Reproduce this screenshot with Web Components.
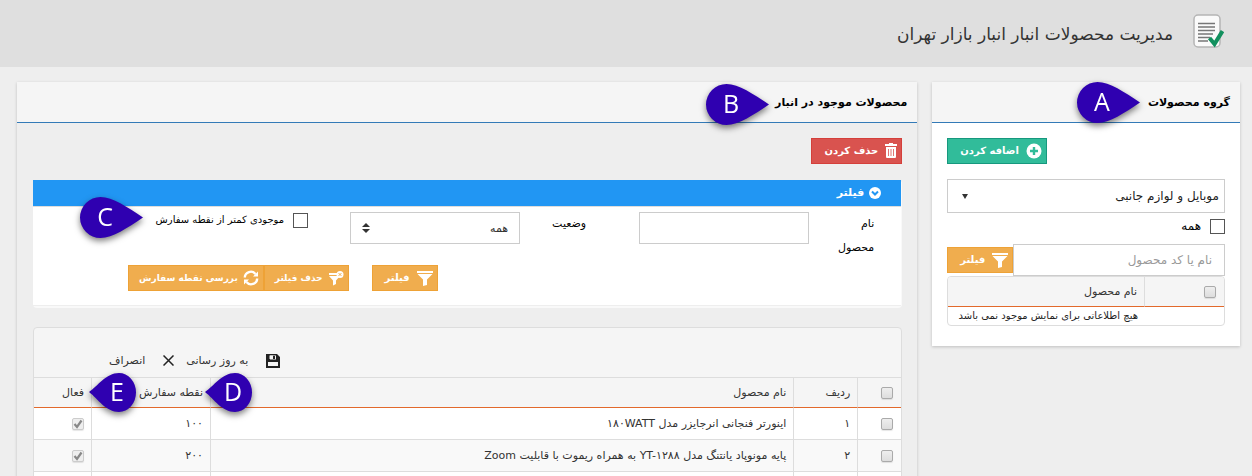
<!DOCTYPE html>
<html lang="fa" dir="rtl">
<head>
<meta charset="utf-8">
<title>مدیریت محصولات انبار</title>
<style>
  html, body { margin: 0; height: 100%; overflow: hidden; }
  body { background: #eee; color: #333; font: 11px/24px "DejaVu Sans", sans-serif; }
</style>
</head>
<body>
<warehouse-page></warehouse-page>
<script>
const icons = {
  plus: '<svg viewBox="0 0 16 16" width="16" height="16"><circle cx="8" cy="8" r="7.5" fill="currentColor"/><path d="M8 4v8M4 8h8" stroke="var(--tone)" stroke-width="2.4"/></svg>',
  trash: '<svg viewBox="0 0 12 16" width="12" height="16" fill="currentColor"><path d="M4 0h4v1h4v2H0V1h4zM1 4h10v10q0 1-1 1H2q-1 0-1-1z"/><path d="M3.5 6v7M6 6v7M8.5 6v7" stroke="var(--tone)" stroke-width=".8"/></svg>',
  funnel: '<svg viewBox="0 0 16 16" width="16" height="16" fill="currentColor"><path d="M0 1h16v2H0zM0.5 4h15L10 9.5V15l-4 1V9.5z"/></svg>',
  unfunnel: '<svg viewBox="0 0 16 16" width="16" height="16" fill="currentColor"><path d="M1 3h8v2H1zM1 6h11L8 10.5V14l-3 1.5V10.5z"/><circle cx="12" cy="4.5" r="3.5"/><path d="M10.6 3.1l2.8 2.8M13.4 3.1l-2.8 2.8" stroke="var(--tone)"/></svg>',
  refresh: '<svg viewBox="0 0 16 16" width="16" height="16" fill="none" stroke="currentColor" stroke-width="2.4"><path d="M1.8 7.5A6 6 0 0 1 12.5 4M14.2 8.5A6 6 0 0 1 3.5 12"/><path d="M15 1.5v5h-5zM1 14.5v-5h5z" fill="currentColor" stroke="none"/></svg>'
};

const define = (name, html, setup) => {
  const template = document.createElement('template');
  template.innerHTML = html;
  customElements.define(name, class extends HTMLElement {
    constructor() {
      super();
      this.attachShadow({ mode: 'open' }).append(template.content.cloneNode(true));
    }
    connectedCallback() { if (setup) setup(this, this.shadowRoot); }
  });
};

/* Teardrop marker with a letter; "flip" points it to the left. */
define('guide-pin', `
  <style>
    :host { position: absolute; z-index: 2; width: 64px; height: 41px; direction: ltr; }
    :host([flip]) { width: 47px; }
    svg { display: block; overflow: visible; filter: drop-shadow(0 3px 3px rgba(0,0,0,.5)); }
    text { font: 25px "Open Sans", sans-serif; fill: #fff; text-anchor: middle; }
  </style>
  <svg></svg>`, (host, root) => {
  const flip = host.hasAttribute('flip');
  const svg = root.querySelector('svg');
  svg.setAttribute('width', flip ? 47 : 64);
  svg.setAttribute('height', 41);
  svg.innerHTML = (flip
    ? '<path d="M0 20C9 14 17 1 30 1A17 19.5 0 0 1 30 40C17 40 9 27 0 20z" fill="#2f00b0"/>'
    : '<path d="M63 20.5C47 10 33 0 20.5 0A20.5 20.5 0 0 0 20.5 41C33 41 47 31 63 20.5z" fill="#2f00b0"/>')
    + `<text x="${flip ? 28 : 25}" y="29">${host.getAttribute('letter')}</text>`;
});

define('page-banner', `
  <style>
    :host { display: flex; flex: none; align-items: center; gap: 20px; height: 67px; padding: 0 28px; background: #dfdfdf; box-sizing: border-box; }
    h1 { margin: 0; font-size: 17px; line-height: 32px; font-weight: 400; color: #333; }
    svg { flex: none; margin-bottom: 6px; }
  </style>
  <svg width="31" height="34" viewBox="0 0 31 34"><rect x="1" y="1" width="26" height="32" rx="4" fill="#fafafa" stroke="#b5b5b5" stroke-width="1.5"/><path d="M5 9.5h17M5 13h17M5 16.5h17M5 20h15M5 23.500h12M5 27h10" stroke="#777" stroke-width="1.5"/><path d="M16.500 24l5 6L29.500 17" fill="none" stroke="#12905e" stroke-width="4"/></svg>
  <h1><slot></slot></h1>`);

define('content-panel', `
  <style>
    :host { display: block; background: var(--panel-bg, #fff); box-shadow: 0 1px 3px rgba(0,0,0,.2); }
    header { position: relative; height: 40px; padding: 0 10px; background: #f5f5f5; border-bottom: 1px solid #337ab7; }
    h2 { margin: 0; font-size: 11px; line-height: 42px; font-weight: 700; color: #000; }
    .body { padding: 15px; }
  </style>
  <header><h2><slot name="title"></slot></h2><slot name="pin"></slot></header>
  <div class="body"><slot></slot></div>`);

define('action-button', `
  <style>
    :host { display: block; --tone: #f0ad4e; --edge: #eea236; }
    :host([tone="add"]) { --tone: #31bc9a; --edge: #17987e; }
    :host([tone="remove"]) { --tone: #d9534f; --edge: #d43f3a; }
    button { display: flex; align-items: center; gap: 7px; height: 26px; margin: 0; padding: 0 4px 0 12px; border: 1px solid var(--edge); background: var(--tone); color: #fff; font: 700 10px/16px "DejaVu Sans", sans-serif; white-space: nowrap; }
    :host([dense]) button { gap: 5px; padding-left: 10px; font-size: 9px; }
    svg { display: block; flex: none; }
    .icon { display: block; }
  </style>
  <button type="button"><span class="icon"></span><slot></slot></button>`, (host, root) => {
  root.querySelector('.icon').innerHTML = icons[host.getAttribute('icon')];
});

define('tick-field', `
  <style>
    :host { display: block; }
    label { display: flex; align-items: center; gap: 9px; line-height: 16px; color: #000; }
    input { appearance: none; flex: none; width: 15px; height: 15px; margin: 0; border: 1px solid #555; background: #fff; }
  </style>
  <label><input type="checkbox"><slot></slot></label>`);

const gridStyles = `
    table { width: 100%; border-collapse: separate; border-spacing: 0; table-layout: fixed; color: #333; }
    th, td { box-sizing: border-box; padding: 0 7px; font-weight: 400; text-align: start; border-inline-start: 1px solid #ddd; white-space: nowrap; }
    th:first-child, td:first-child { border-inline-start: 0; padding-inline-start: 8px; }
    th { height: 30px; background: #f5f5f5; border-bottom: 1px solid #e2692b; }
    th input, td input { appearance: none; display: block; width: 12px; height: 12px; margin: 0; border: 1px solid #aaa; border-radius: 2px; background: linear-gradient(#eee, #ddd); box-shadow: 0 1px 1px rgba(0,0,0,.1); }`;

define('product-groups', `
  <style>
    :host { display: block; }
    .add { display: flex; justify-content: flex-end; margin-bottom: 15px; }
    .pick { display: grid; align-items: center; margin-bottom: 5px; }
    .pick > * { grid-area: 1 / 1; }
    select { appearance: none; width: 100%; height: 34px; margin: 0; padding: 0 5px; border: 1px solid #ccc; border-radius: 0; background: #fff; color: #222; font: 12px "DejaVu Sans", sans-serif; }
    .pick svg { justify-self: end; margin-inline-end: 15px; pointer-events: none; }
    tick-field { font-size: 12px; }
    .search { display: flex; align-items: center; margin-top: 10px; }
    .search input { flex: 1; min-width: 0; height: 32px; box-sizing: border-box; margin: 0; padding: 0 12px; border: 1px solid #ccc; background: #fff; font: 12px "DejaVu Sans", sans-serif; }
    .search input::placeholder { color: #999; opacity: 1; }
    .frame { border: 1px solid #ddd; border-radius: 4px; overflow: hidden; margin-bottom: 5px; }
    ${gridStyles}
    td { height: 18px; line-height: 18px; border: 0; font-size: 10px; color: #222; }
    .tick { width: 79px; }
  </style>
  <div class="add"><action-button tone="add" icon="plus">اضافه کردن</action-button></div>
  <div class="pick">
    <select aria-label="گروه محصولات"><option>موبایل و لوازم جانبی</option></select>
    <svg width="6" height="5"><path d="M0 0h6L3 5z" fill="#333"/></svg>
  </div>
  <tick-field>همه</tick-field>
  <div class="search"><input type="text" aria-label="نام یا کد محصول" placeholder="نام یا کد محصول"><action-button icon="funnel">فیلتر</action-button></div>
  <div class="frame"><table>
    <thead><tr><th class="tick"><input type="checkbox" aria-label="انتخاب همه"></th><th>نام محصول</th></tr></thead>
    <tbody><tr><td></td><td>هیچ اطلاعاتی برای نمایش موجود نمی باشد</td></tr></tbody>
  </table></div>`);

define('filter-panel', `
  <style>
    :host { display: block; border: solid #f9f9f9; border-width: 0 1px 2px 0; border-radius: 4px; background: #fff; margin: 16px 0 19px 1px; }
    h3 { display: flex; align-items: center; gap: 5px; margin: 0; padding: 0 20px; height: 26px; background: #2196f3; color: #fff; font-size: 11px; line-height: 26px; }
    .fields { display: grid; grid-template-columns: 65fr 170fr 53fr 66fr 170fr 42fr 275fr; padding: 5px 27px 0 0; height: 59px; box-sizing: border-box; border-top: 1px solid #ddd; color: #000; }
    .fields input, select { appearance: none; box-sizing: border-box; width: 100%; height: 32px; margin: 0; border: 1px solid #ccc; border-radius: 0; background: #fff; padding: 0 11px; color: #333; font: 11px "DejaVu Sans", sans-serif; }
    .fields input { grid-column: 2; }
    .state { grid-column: 4; }
    .name { width: min-content; }
    .pick { grid-column: 5; display: grid; align-items: center; align-self: start; }
    .pick > * { grid-area: 1 / 1; }
    .pick svg { justify-self: end; margin-inline-end: 12px; pointer-events: none; }
    tick-field { grid-column: 7; font-size: 10px; }
    .actions { display: flex; padding: 0 53.4% 14px 0; border-bottom: 1px solid #eee; }
    .actions :first-child { margin-inline-end: 23px; }
  </style>
  <h3><svg width="12" height="12" viewBox="0 0 12 12"><circle cx="6" cy="6" r="6" fill="#fff"/><path d="M3 4.5l3 3 3-3" fill="none" stroke="#2196f3" stroke-width="2"/></svg>فیلتر</h3>
  <div class="fields">
    <label class="name" for="name">نام محصول</label><input id="name" type="text">
    <label class="state" for="state">وضعیت</label>
    <div class="pick"><select id="state"><option>همه</option></select><svg width="8" height="10"><path d="M0 4h8L4 0zM0 6h8L4 10z" fill="#333"/></svg></div>
    <tick-field>موجودی کمتر از نقطه سفارش</tick-field>
  </div>
  <div class="actions"><action-button icon="funnel">فیلتر</action-button><action-button dense icon="unfunnel">حذف فیلتر</action-button><action-button dense icon="refresh">بررسی نقطه سفارش</action-button></div>
  `);

define('stock-table', `
  <style>
    :host { display: block; margin-left: 1px; border: 1px solid #ddd; border-radius: 4px 4px 0 0; background: #f5f5f5; }
    .tools { display: flex; align-items: center; height: 50px; padding-top: 16px; box-sizing: border-box; padding-inline-start: 621px; border-bottom: 1px solid #ddd; }
    .tools button { display: flex; align-items: center; gap: 18px; margin: 0; padding: 0; border: 0; background: none; color: #333; font: 11px/24px "DejaVu Sans", sans-serif; white-space: nowrap; }
    .tools .cancel { margin-inline-start: 12px; }
    ${gridStyles}
    th { position: relative; }
    td { height: 32px; border-bottom: 1px solid #ddd; background: #fff; }
    tr:nth-child(even) td { background: #f9f9f9; }
    .tick { width: 43px; }
    .row { width: 64px; }
    .point { width: 119px; }
    .live { width: 58px; }
    td input:checked { border-color: #ccc; background: #eee; }
    .on { display: grid; width: 12px; }
    .on > * { grid-area: 1 / 1; }
    .on svg { z-index: 1; pointer-events: none; }
    .d, .e { top: -6px; }
    .d { right: -42px; }
    .e { right: -45px; }
  </style>
  <div class="tools">
    <button type="button" class="save"><svg width="14" height="14" viewBox="0 0 14 14"><path fill="#222" fill-rule="evenodd" d="M0 0h11l3 3v11H0zM2 8v4h10V8zM4 1.500v4h6v-4zM7 2h2v3H7z"/><path fill="#f5f5f5" d="M3.500 1.500H7V5H3.500z"/></svg>به روز رسانی</button>
    <button type="button" class="cancel"><svg width="11" height="11" viewBox="0 0 11 11" stroke="#222" stroke-width="1.5"><path d="M.5.5l10 10M10.5.5l-10 10"/></svg>انصراف</button>
  </div>
  <table>
    <thead><tr><th class="tick"><input type="checkbox" aria-label="انتخاب همه"></th><th class="row">ردیف</th><th>نام محصول</th><th class="point">نقطه سفارش<guide-pin class="d" flip letter="D"></guide-pin></th><th class="live">فعال<guide-pin class="e" flip letter="E"></guide-pin></th></tr></thead>
    <tbody></tbody>
  </table>`, (host, root) => {
  const tick = '<svg width="12" height="12" viewBox="0 0 12 12"><path d="M2.5 6l2.500 3L9.500 2.500" fill="none" stroke="#888" stroke-width="2.2"/></svg>';
  const rows = [
    ['۱', 'اینورتر فنجانی انرجایزر مدل ۱۸۰WATT', '۱۰۰'],
    ['۲', 'پایه مونوپاد یانتنگ مدل YT-۱۲۸۸ به همراه ریموت با قابلیت Zoom', '۲۰۰']
  ];
  root.querySelector('tbody').innerHTML = rows.map(([n, name, point]) =>
    `<tr><td><input type="checkbox" aria-label="${name}"></td><td>${n}</td><td>${name}</td><td>${point}</td><td><span class="on"><input type="checkbox" checked disabled aria-label="فعال">${tick}</span></td></tr>`
  ).join('') + '<tr><td></td><td></td><td></td><td></td><td></td></tr>';
});

define('warehouse-page', `
  <style>
    :host { display: flex; flex-direction: column; height: 100%; overflow: hidden; }
    main { flex: 1; min-height: 0; display: grid; grid-template-columns: minmax(0, 308fr) minmax(0, 901fr); align-items: start; gap: 15px; padding: 15px 12px 0 17px; }
    .stock { --panel-bg: #eee; }
    .remove { display: flex; }
    .a { right: 99px; top: 0; }
    .b { right: 147px; top: 2px; }
    .filters { position: relative; }
    .c { left: 48px; top: 17px; }
  </style>
  <page-banner>مدیریت محصولات انبار انبار بازار تهران</page-banner>
  <main>
    <content-panel><span slot="title">گروه محصولات</span><guide-pin slot="pin" class="a" letter="A"></guide-pin><product-groups></product-groups></content-panel>
    <content-panel class="stock"><span slot="title">محصولات موجود در انبار</span><guide-pin slot="pin" class="b" letter="B"></guide-pin>
      <div class="remove"><action-button tone="remove" icon="trash">حذف کردن</action-button></div>
      <div class="filters"><filter-panel></filter-panel><guide-pin class="c" letter="C"></guide-pin></div>
      <stock-table></stock-table>
    </content-panel>
  </main>`);
</script>
</body>
</html>
